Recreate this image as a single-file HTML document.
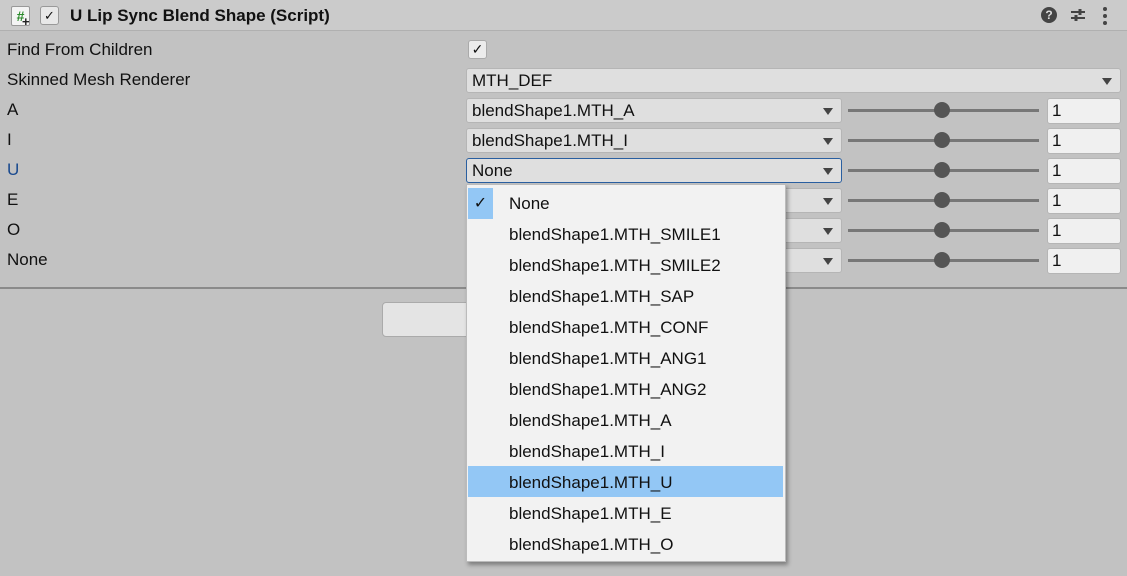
<!DOCTYPE html>
<html><head><meta charset="utf-8"><style>
*{margin:0;padding:0;box-sizing:border-box}
body{width:1127px;height:576px;background:#c2c2c2;font-family:"Liberation Sans",sans-serif;font-size:17px;color:#111;position:relative;overflow:hidden}
.a{position:absolute}
.hdr{left:0;top:0;width:1127px;height:31px;background:#cbcbcb;border-bottom:1px solid #b0b0b0}
.lbl{left:7px;height:30px;line-height:30px}
.pop{left:466px;width:376px;height:25px;background:#dfdfdf;border:1px solid #b5b5b5;border-radius:3px;line-height:23px;padding-left:5px}
.pop:after{content:"";position:absolute;right:8px;top:9px;border-left:5px solid transparent;border-right:5px solid transparent;border-top:7px solid #444}
.trk{left:848px;width:191px;height:3px;background:#777}
.knob{left:934px;width:16px;height:16px;border-radius:50%;background:#555}
.num{left:1047px;width:74px;height:26px;background:#f0f0f0;border:1px solid #b5b5b5;border-radius:3px;line-height:24px;padding-left:4px}
.mi{left:509px;height:31px;line-height:31px;font-size:17px;color:#111}
</style></head><body>
<div class="a hdr"></div>
<div class="a" style="left:11px;top:6px;width:19px;height:20px;background:#f4f4f4;border:1px solid #999;border-radius:2px;color:#2a8a2a;font-size:14px;font-weight:bold;line-height:18px;text-align:center">#</div>
<div class="a" style="left:22px;top:17px;width:9px;height:9px;color:#222;font-size:13px;font-weight:bold;line-height:9px">+</div>
<div class="a" style="left:40px;top:6px;width:19px;height:19px;background:#e8e8e8;border:1px solid #999;border-radius:3px;font-size:13px;line-height:17px;text-align:center">✓</div>
<div class="a" style="left:70px;top:0;height:31px;line-height:31px;font-weight:bold;font-size:17px">U Lip Sync Blend Shape (Script)</div>
<div class="a" style="left:1041px;top:7px;width:16px;height:16px;border-radius:50%;background:#444;color:#ddd;font-size:12px;font-weight:bold;text-align:center;line-height:16px">?</div>
<svg class="a" style="left:1069px;top:6px" width="18" height="18"><path d="M2 6h14M2 12h14" stroke="#444" stroke-width="2"/><path d="M11 3v6M7 9v6" stroke="#444" stroke-width="3"/></svg>
<svg class="a" style="left:1102px;top:6px" width="6" height="20"><circle cx="3" cy="3" r="2" fill="#444"/><circle cx="3" cy="10" r="2" fill="#444"/><circle cx="3" cy="17" r="2" fill="#444"/></svg>

<div class="a lbl" style="top:35px">Find From Children</div>
<div class="a lbl" style="top:65px">Skinned Mesh Renderer</div>
<div class="a lbl" style="top:95px">A</div>
<div class="a lbl" style="top:125px">I</div>
<div class="a lbl" style="top:155px;color:#1a4a8f">U</div>
<div class="a lbl" style="top:185px">E</div>
<div class="a lbl" style="top:215px">O</div>
<div class="a lbl" style="top:245px">None</div>

<div class="a" style="left:468px;top:40px;width:19px;height:19px;background:#ececec;border:1px solid #aaa;border-radius:3px;font-size:14px;line-height:17px;text-align:center">✓</div>
<div class="a pop" style="top:68px;width:655px">MTH_DEF</div>

<div class="a pop" style="top:98px">blendShape1.MTH_A</div>
<div class="a pop" style="top:128px">blendShape1.MTH_I</div>
<div class="a pop" style="top:158px;border-color:#2a5fa0">None</div>
<div class="a pop" style="top:188px"></div>
<div class="a pop" style="top:218px"></div>
<div class="a pop" style="top:248px"></div>

<div class="a trk" style="top:109px"></div><div class="a knob" style="top:102px"></div><div class="a num" style="top:98px">1</div>
<div class="a trk" style="top:139px"></div><div class="a knob" style="top:132px"></div><div class="a num" style="top:128px">1</div>
<div class="a trk" style="top:169px"></div><div class="a knob" style="top:162px"></div><div class="a num" style="top:158px">1</div>
<div class="a trk" style="top:199px"></div><div class="a knob" style="top:192px"></div><div class="a num" style="top:188px">1</div>
<div class="a trk" style="top:229px"></div><div class="a knob" style="top:222px"></div><div class="a num" style="top:218px">1</div>
<div class="a trk" style="top:259px"></div><div class="a knob" style="top:252px"></div><div class="a num" style="top:248px">1</div>

<div class="a" style="left:0;top:287px;width:1127px;height:2px;background:#8a8a8a"></div>
<div class="a" style="left:382px;top:302px;width:100px;height:35px;background:#e4e4e4;border:1px solid #aaa;border-radius:4px"></div>

<div class="a" style="left:466px;top:184px;width:320px;height:378px;background:#f2f2f2;border:1px solid #bbb;box-shadow:2px 3px 4px rgba(0,0,0,.35)"></div>
<div class="a" style="left:468px;top:188px;width:25px;height:31px;background:#93c7f5;text-align:center;line-height:31px;font-size:16px">✓</div>
<div class="a" style="left:468px;top:466px;width:315px;height:31px;background:#93c7f5"></div>
<div class="a mi" style="top:188px">None</div>
<div class="a mi" style="top:219px">blendShape1.MTH_SMILE1</div>
<div class="a mi" style="top:250px">blendShape1.MTH_SMILE2</div>
<div class="a mi" style="top:281px">blendShape1.MTH_SAP</div>
<div class="a mi" style="top:312px">blendShape1.MTH_CONF</div>
<div class="a mi" style="top:343px">blendShape1.MTH_ANG1</div>
<div class="a mi" style="top:374px">blendShape1.MTH_ANG2</div>
<div class="a mi" style="top:405px">blendShape1.MTH_A</div>
<div class="a mi" style="top:436px">blendShape1.MTH_I</div>
<div class="a mi" style="top:467px">blendShape1.MTH_U</div>
<div class="a mi" style="top:498px">blendShape1.MTH_E</div>
<div class="a mi" style="top:529px">blendShape1.MTH_O</div>
</body></html>
